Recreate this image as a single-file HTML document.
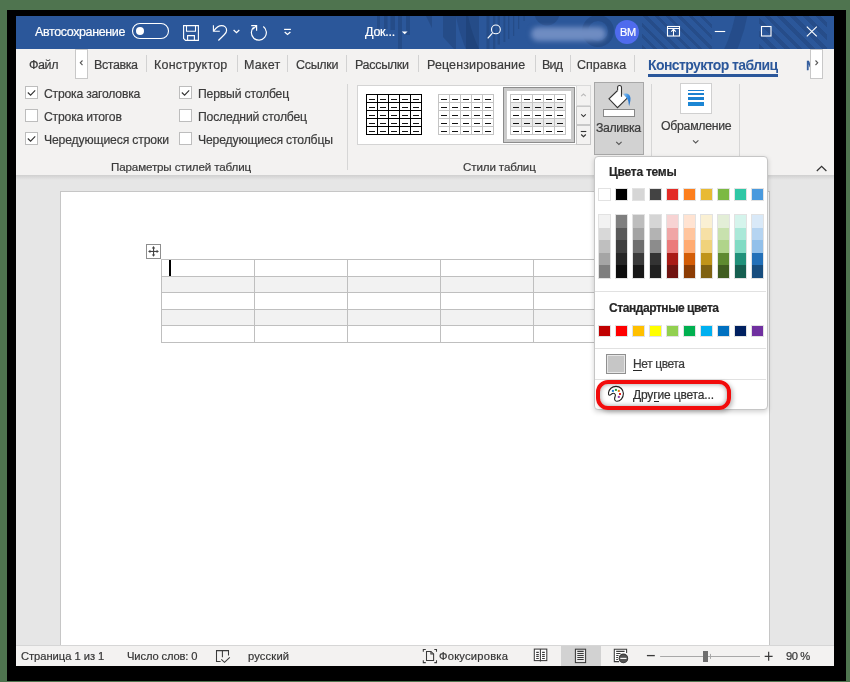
<!DOCTYPE html>
<html><head><meta charset="utf-8">
<style>
*{margin:0;padding:0;box-sizing:border-box}
html,body{width:850px;height:682px;overflow:hidden;background:#4f744f;font-family:"Liberation Sans",sans-serif}
.a{position:absolute}
.t{position:absolute;white-space:nowrap;line-height:1;font-family:"Liberation Sans",sans-serif;will-change:transform;-webkit-text-stroke:0.2px currentColor}
svg{position:absolute;left:0;top:0;overflow:visible}
.sep{position:absolute;width:1px;background:#d2d2d2}
.cb{position:absolute;width:13px;height:13px;background:#fff;border:1px solid #bdbdbd}

</style></head><body>
<div class="a" style="left:7px;top:10px;width:839px;height:671px;background:#000"></div>
<div class="a" style="left:16px;top:16px;width:818px;height:650px;background:#e6e6e6"></div>
<!-- title bar -->
<div class="a" style="left:16px;top:16px;width:818px;height:33px;background:#2b579a;overflow:hidden">
  <svg width="818" height="33" style="left:0;top:0" fill="rgba(20,40,80,.24)" stroke="none">
    <rect x="361" y="0" width="3" height="14"/>
    <rect x="368" y="0" width="3.5" height="13"/>
    <rect x="374.5" y="0" width="4.5" height="14"/>
    <rect x="382" y="0" width="4" height="33"/>
    <rect x="390" y="0" width="4" height="19"/>
    <path d="M410 0H416L416 12Z"/>
    <path d="M427 0H440V33H438L427 21Z"/>
    <rect x="450" y="0" width="13" height="33"/>
    <rect x="470.5" y="0" width="3" height="33"/>
    <rect x="477" y="0" width="2.3" height="33"/>
    <rect x="481.6" y="0" width="2.4" height="28.6"/>
    <rect x="487.5" y="0" width="1.8" height="26"/>
    <rect x="492" y="0" width="1.4" height="23"/>
    <rect x="497" y="0" width="1.2" height="20"/>
    <rect x="502" y="0" width="1.2" height="13"/>
    <rect x="507.5" y="0" width="1.2" height="5"/>
    <circle cx="531" cy="-3" r="12.5"/>
    <circle cx="582" cy="15" r="13" fill="none" stroke="rgba(20,40,80,.24)" stroke-width="6"/>
    <circle cx="585.6" cy="-26" r="142" fill="none" stroke="rgba(20,40,80,.22)" stroke-width="12"/>
  </svg>
  <div class="a" style="left:626px;top:0;width:70px;height:33px;background:repeating-linear-gradient(45deg,rgba(20,40,80,.22) 0 3px,transparent 3px 8px)"></div>
  <div class="a" style="left:743px;top:0;width:68px;height:33px;background:repeating-linear-gradient(45deg,rgba(20,40,80,.22) 0 4px,transparent 4px 9px)"></div>
</div>
<svg width="850" height="682" fill="none" stroke="#fff" stroke-width="1.1">
  <!-- toggle -->
  <rect x="132.5" y="23.5" width="36" height="15" rx="7.5"/>
  <circle cx="140" cy="31" r="4" fill="#fff" stroke="none"/>
  <!-- save -->
  <path d="M183.6 25.6H198.4V40.4H185.5L183.6 38.5Z"/>
  <path d="M186.5 25.6V31.2H195.5V25.6"/>
  <path d="M187.6 40.4V35.6H194.4V40.4"/>
  <!-- undo -->
  <path d="M213.4 25.2V31.3H219.8"/>
  <path d="M213.8 30.8C217 26.5 219.5 25.6 221.6 25.6C224.5 25.6 226.6 27.5 226.6 30.2C226.6 32.2 225.6 33.5 224.2 34.8L218.4 40.5" stroke-width="1.2"/>
  <path d="M233.6 30.1L236.5 32.7L239.3 30.1" stroke-width="1.3"/>
  <!-- redo -->
  <path d="M263.3 26.6A7.5 7.5 0 1 1 253.6 27.3" stroke-width="1.2"/>
  <path d="M251.2 25.6H256.6V30.8" stroke-width="1.2"/>
  <path d="M256.4 25.8L253 29.2" stroke-width="1.2"/>
  <!-- customize -->
  <path d="M284.1 29.4H290.9" stroke-width="1.2"/>
  <path d="M284.7 32.1L287.5 34.5L290.4 32.1" stroke-width="1.3"/>
  <!-- doc dropdown triangle -->
  <path d="M401.8 31.4H407.6L404.7 34.2Z" fill="#fff" stroke="none"/>
  <!-- search -->
  <circle cx="495.9" cy="29.4" r="4.4"/>
  <path d="M492.4 33.1L487.7 38.3" stroke-width="1.2"/>
  <!-- ribbon display -->
  <rect x="667.5" y="26.5" width="12" height="9.5"/>
  <path d="M667.5 28.5H679.5M673.5 29.5V36M671.2 31.6L673.5 29.3L675.8 31.6"/>
  <!-- minimize -->
  <path d="M714.8 31.5H725.2"/>
  <!-- maximize -->
  <rect x="761.5" y="26.5" width="9.5" height="9.5"/>
  <!-- close -->
  <path d="M806.8 26.6L816.8 36.4M816.8 26.6L806.8 36.4"/>
</svg>
<!-- blurred name -->
<div class="a" style="left:531px;top:27px;width:75px;height:14px;border-radius:7px;background:#6f8cc2;filter:blur(2.5px)"></div>
<!-- avatar -->
<div class="a" style="left:615px;top:19.8px;width:24px;height:24px;border-radius:50%;background:#4f6bed"></div>
<div class="t" style="left:619.5px;top:27px;font-size:11px;color:#fff;letter-spacing:-0.4px">BM</div>
<!-- ribbon area -->
<div class="a" style="left:16px;top:49px;width:818px;height:126px;background:#f3f2f1"></div>
<div class="a" style="left:16px;top:175px;width:818px;height:5px;background:linear-gradient(#d0d0d0,#e6e6e6)"></div>
<!-- tab scroll buttons -->
<div class="a" style="left:75px;top:49px;width:13px;height:30px;background:#fff;border:1px solid #c8c8c8"></div>
<svg width="850" height="682" fill="none" stroke="#555" stroke-width="1.1">
  <path d="M82.5 60.5L80.3 62.8L82.5 65"/>
</svg>
<div class="t" style="left:805.6px;top:58.8px;font-size:13.5px;color:#2b579a;-webkit-text-stroke:0.5px #2b579a">М</div>
<div class="a" style="left:810px;top:49px;width:13px;height:30px;background:#fff;border:1px solid #c8c8c8"></div>
<svg width="850" height="682" fill="none" stroke="#555" stroke-width="1.1">
  <path d="M815.5 60.5L817.7 62.8L815.5 65"/>
</svg>
<!-- tab separators -->
<div class="sep" style="left:146px;top:55px;height:17px"></div>
<div class="sep" style="left:237px;top:55px;height:17px"></div>
<div class="sep" style="left:287px;top:55px;height:17px"></div>
<div class="sep" style="left:346px;top:55px;height:17px"></div>
<div class="sep" style="left:418px;top:55px;height:17px"></div>
<div class="sep" style="left:535px;top:55px;height:17px"></div>
<div class="sep" style="left:570px;top:55px;height:17px"></div>
<div class="sep" style="left:634px;top:55px;height:17px"></div>
<div class="a" style="left:648px;top:74px;width:130px;height:3px;background:#2b579a"></div>
<!-- checkboxes -->
<div class="cb" style="left:25px;top:86px"></div>
<div class="cb" style="left:25px;top:109px"></div>
<div class="cb" style="left:25px;top:132px"></div>
<div class="cb" style="left:179px;top:86px"></div>
<div class="cb" style="left:179px;top:109px"></div>
<div class="cb" style="left:179px;top:132px"></div>
<svg width="850" height="682" fill="none" stroke="#333" stroke-width="1.1">
  <path d="M27.8 92.5L30.6 95.2L35.2 90.4"/>
  <path d="M27.8 138.5L30.6 141.2L35.2 136.4"/>
  <path d="M181.8 92.5L184.6 95.2L189.2 90.4"/>
</svg>
<!-- group separators -->
<div class="sep" style="left:347px;top:84px;height:86px;background:#d6d6d6"></div>
<div class="sep" style="left:651px;top:84px;height:86px;background:#d6d6d6"></div>
<div class="sep" style="left:739px;top:84px;height:86px;background:#d6d6d6"></div>
<!-- gallery -->
<div class="a" style="left:357px;top:85px;width:220px;height:60px;background:#fff;border:1px solid #d4d4d4"></div>
<svg width="850" height="682" shape-rendering="crispEdges">
  <defs>
    <pattern id="dash" x="366" y="94" width="11" height="8" patternUnits="userSpaceOnUse">
      <rect x="3" y="4.5" width="6" height="1.3" fill="#000"/>
    </pattern>
  </defs>
</svg>
<svg width="850" height="682" shape-rendering="crispEdges">
<rect x="503.5" y="87.5" width="71" height="55" fill="#cacaca" stroke="#8c8c8c" stroke-width="1"/>
<rect x="507" y="91" width="64" height="48" fill="#fff"/>
<rect x="366" y="94" width="1" height="41" fill="#000"/>
<rect x="377" y="94" width="1" height="41" fill="#000"/>
<rect x="388" y="94" width="1" height="41" fill="#000"/>
<rect x="399" y="94" width="1" height="41" fill="#000"/>
<rect x="410" y="94" width="1" height="41" fill="#000"/>
<rect x="421" y="94" width="1" height="41" fill="#000"/>
<rect x="366" y="94" width="56" height="1" fill="#000"/>
<rect x="366" y="102" width="56" height="1" fill="#000"/>
<rect x="366" y="110" width="56" height="1" fill="#000"/>
<rect x="366" y="118" width="56" height="1" fill="#000"/>
<rect x="366" y="126" width="56" height="1" fill="#000"/>
<rect x="366" y="134" width="56" height="1" fill="#000"/>
<rect x="369" y="99" width="6" height="1" fill="#111"/>
<rect x="369" y="107" width="6" height="1" fill="#111"/>
<rect x="369" y="115" width="6" height="1" fill="#111"/>
<rect x="369" y="123" width="6" height="1" fill="#111"/>
<rect x="369" y="131" width="6" height="1" fill="#111"/>
<rect x="380" y="99" width="6" height="1" fill="#111"/>
<rect x="380" y="107" width="6" height="1" fill="#111"/>
<rect x="380" y="115" width="6" height="1" fill="#111"/>
<rect x="380" y="123" width="6" height="1" fill="#111"/>
<rect x="380" y="131" width="6" height="1" fill="#111"/>
<rect x="391" y="99" width="6" height="1" fill="#111"/>
<rect x="391" y="107" width="6" height="1" fill="#111"/>
<rect x="391" y="115" width="6" height="1" fill="#111"/>
<rect x="391" y="123" width="6" height="1" fill="#111"/>
<rect x="391" y="131" width="6" height="1" fill="#111"/>
<rect x="402" y="99" width="6" height="1" fill="#111"/>
<rect x="402" y="107" width="6" height="1" fill="#111"/>
<rect x="402" y="115" width="6" height="1" fill="#111"/>
<rect x="402" y="123" width="6" height="1" fill="#111"/>
<rect x="402" y="131" width="6" height="1" fill="#111"/>
<rect x="413" y="99" width="6" height="1" fill="#111"/>
<rect x="413" y="107" width="6" height="1" fill="#111"/>
<rect x="413" y="115" width="6" height="1" fill="#111"/>
<rect x="413" y="123" width="6" height="1" fill="#111"/>
<rect x="413" y="131" width="6" height="1" fill="#111"/>
<rect x="438" y="94" width="1" height="41" fill="#c4c4c4"/>
<rect x="449" y="94" width="1" height="41" fill="#c4c4c4"/>
<rect x="460" y="94" width="1" height="41" fill="#c4c4c4"/>
<rect x="471" y="94" width="1" height="41" fill="#c4c4c4"/>
<rect x="482" y="94" width="1" height="41" fill="#c4c4c4"/>
<rect x="493" y="94" width="1" height="41" fill="#c4c4c4"/>
<rect x="438" y="94" width="56" height="1" fill="#c4c4c4"/>
<rect x="438" y="102" width="56" height="1" fill="#c4c4c4"/>
<rect x="438" y="110" width="56" height="1" fill="#c4c4c4"/>
<rect x="438" y="118" width="56" height="1" fill="#c4c4c4"/>
<rect x="438" y="126" width="56" height="1" fill="#c4c4c4"/>
<rect x="438" y="134" width="56" height="1" fill="#c4c4c4"/>
<rect x="441" y="99" width="6" height="1" fill="#111"/>
<rect x="441" y="107" width="6" height="1" fill="#111"/>
<rect x="441" y="115" width="6" height="1" fill="#111"/>
<rect x="441" y="123" width="6" height="1" fill="#111"/>
<rect x="441" y="131" width="6" height="1" fill="#111"/>
<rect x="452" y="99" width="6" height="1" fill="#111"/>
<rect x="452" y="107" width="6" height="1" fill="#111"/>
<rect x="452" y="115" width="6" height="1" fill="#111"/>
<rect x="452" y="123" width="6" height="1" fill="#111"/>
<rect x="452" y="131" width="6" height="1" fill="#111"/>
<rect x="463" y="99" width="6" height="1" fill="#111"/>
<rect x="463" y="107" width="6" height="1" fill="#111"/>
<rect x="463" y="115" width="6" height="1" fill="#111"/>
<rect x="463" y="123" width="6" height="1" fill="#111"/>
<rect x="463" y="131" width="6" height="1" fill="#111"/>
<rect x="474" y="99" width="6" height="1" fill="#111"/>
<rect x="474" y="107" width="6" height="1" fill="#111"/>
<rect x="474" y="115" width="6" height="1" fill="#111"/>
<rect x="474" y="123" width="6" height="1" fill="#111"/>
<rect x="474" y="131" width="6" height="1" fill="#111"/>
<rect x="485" y="99" width="6" height="1" fill="#111"/>
<rect x="485" y="107" width="6" height="1" fill="#111"/>
<rect x="485" y="115" width="6" height="1" fill="#111"/>
<rect x="485" y="123" width="6" height="1" fill="#111"/>
<rect x="485" y="131" width="6" height="1" fill="#111"/>
<rect x="510" y="102" width="55" height="8" fill="#ececec"/>
<rect x="510" y="118" width="55" height="8" fill="#ececec"/>
<rect x="510" y="94" width="1" height="41" fill="#c4c4c4"/>
<rect x="521" y="94" width="1" height="41" fill="#c4c4c4"/>
<rect x="532" y="94" width="1" height="41" fill="#c4c4c4"/>
<rect x="543" y="94" width="1" height="41" fill="#c4c4c4"/>
<rect x="554" y="94" width="1" height="41" fill="#c4c4c4"/>
<rect x="565" y="94" width="1" height="41" fill="#c4c4c4"/>
<rect x="510" y="94" width="56" height="1" fill="#c4c4c4"/>
<rect x="510" y="102" width="56" height="1" fill="#c4c4c4"/>
<rect x="510" y="110" width="56" height="1" fill="#c4c4c4"/>
<rect x="510" y="118" width="56" height="1" fill="#c4c4c4"/>
<rect x="510" y="126" width="56" height="1" fill="#c4c4c4"/>
<rect x="510" y="134" width="56" height="1" fill="#c4c4c4"/>
<rect x="513" y="99" width="6" height="1" fill="#111"/>
<rect x="513" y="107" width="6" height="1" fill="#111"/>
<rect x="513" y="115" width="6" height="1" fill="#111"/>
<rect x="513" y="123" width="6" height="1" fill="#111"/>
<rect x="513" y="131" width="6" height="1" fill="#111"/>
<rect x="524" y="99" width="6" height="1" fill="#111"/>
<rect x="524" y="107" width="6" height="1" fill="#111"/>
<rect x="524" y="115" width="6" height="1" fill="#111"/>
<rect x="524" y="123" width="6" height="1" fill="#111"/>
<rect x="524" y="131" width="6" height="1" fill="#111"/>
<rect x="535" y="99" width="6" height="1" fill="#111"/>
<rect x="535" y="107" width="6" height="1" fill="#111"/>
<rect x="535" y="115" width="6" height="1" fill="#111"/>
<rect x="535" y="123" width="6" height="1" fill="#111"/>
<rect x="535" y="131" width="6" height="1" fill="#111"/>
<rect x="546" y="99" width="6" height="1" fill="#111"/>
<rect x="546" y="107" width="6" height="1" fill="#111"/>
<rect x="546" y="115" width="6" height="1" fill="#111"/>
<rect x="546" y="123" width="6" height="1" fill="#111"/>
<rect x="546" y="131" width="6" height="1" fill="#111"/>
<rect x="557" y="99" width="6" height="1" fill="#111"/>
<rect x="557" y="107" width="6" height="1" fill="#111"/>
<rect x="557" y="115" width="6" height="1" fill="#111"/>
<rect x="557" y="123" width="6" height="1" fill="#111"/>
<rect x="557" y="131" width="6" height="1" fill="#111"/>
</svg>
<!-- gallery scroll buttons -->
<div class="a" style="left:576px;top:85px;width:15px;height:21px;background:#f3f2f1;border:1px solid #dadada"></div>
<div class="a" style="left:576px;top:106px;width:15px;height:19px;background:#f3f2f1;border:1px solid #c8c8c8"></div>
<div class="a" style="left:576px;top:125px;width:15px;height:20px;background:#f3f2f1;border:1px solid #c8c8c8"></div>
<svg width="850" height="682" fill="none" stroke-width="1.1">
  <path d="M581.2 96.2L583.5 94L585.8 96.2" stroke="#bbb"/>
  <path d="M581.2 114.4L583.5 116.6L585.8 114.4" stroke="#333"/>
  <path d="M580.8 131.5H586.3" stroke="#333"/>
  <path d="M581.2 134.5L583.5 136.7L585.8 134.5" stroke="#333"/>
</svg>
<!-- fill button -->
<div class="a" style="left:594px;top:82px;width:49.5px;height:72.5px;background:#d2d2d2;border:1px solid #a8a8a8"></div>
<svg width="850" height="682" fill="none">
  <rect x="603.5" y="109.5" width="31" height="7" fill="#fff" stroke="#888" stroke-width="1"/>
  <path d="M617.6 90.5L627.2 98.2L617.5 107.6L609 98.8Z" fill="#fff"/>
  <path d="M627.2 98.2L617.5 107.6L609 98.8L617.6 90.5" stroke="#333" stroke-width="1.1"/>
  <path d="M617.6 90.5V87.5C617.6 84.8 621.5 84.8 621.5 87.5V96.8" fill="#fff" stroke="#333" stroke-width="1.1"/>
  <defs><linearGradient id="drip" x1="0" y1="0" x2="1" y2="1"><stop offset="0" stop-color="#8cc4f4"/><stop offset=".45" stop-color="#3a8ee0"/><stop offset="1" stop-color="#1a66c0"/></linearGradient></defs>
  <path d="M623.6 94C626.8 92.5 630.5 94.6 630.5 98.5C630.5 101.5 629.6 104 629.1 106.3C628.4 103 628.8 100.3 626.8 98.2Z" fill="url(#drip)"/>
  <path d="M616.2 141.8L618.9 144.4L621.6 141.8" stroke="#555" stroke-width="1.1"/>
</svg>
<!-- border button -->
<div class="a" style="left:680px;top:83px;width:32px;height:31px;background:#fff;border:1px solid #d0d0d0"></div>
<div class="a" style="left:688px;top:90px;width:16px;height:1px;background:#1b80d0"></div>
<div class="a" style="left:688px;top:93px;width:16px;height:2px;background:#1b80d0"></div>
<div class="a" style="left:688px;top:97px;width:16px;height:3px;background:#1b80d0"></div>
<div class="a" style="left:688px;top:102px;width:16px;height:4px;background:#1c86d4"></div>
<svg width="850" height="682" fill="none" stroke-width="1.1">
  <path d="M693 140.3L695.7 142.9L698.4 140.3" stroke="#555"/>
  <path d="M816.8 171L821.6 166.4L826.4 171" stroke="#333" stroke-width="1.25"/>
</svg>
<!-- page -->
<div class="a" style="left:60px;top:191px;width:710px;height:460px;background:#fff;border:1px solid #c6c6c6"></div>
<!-- table move handle -->
<div class="a" style="left:146px;top:244px;width:15px;height:15px;background:#fff;border:1px solid #8e8e8e"></div>
<svg width="850" height="682" fill="#444" stroke="none">
  <rect x="153" y="248" width="1.1" height="7"/>
  <rect x="150" y="250.9" width="7" height="1.1"/>
  <path d="M151.8 248.4L153.5 246.1L155.2 248.4Z"/>
  <path d="M151.8 254.5L153.5 256.8L155.2 254.5Z"/>
  <path d="M150.4 249.7L148.1 251.4L150.4 253.1Z"/>
  <path d="M156.6 249.7L158.9 251.4L156.6 253.1Z"/>
</svg>
<svg width="850" height="682" shape-rendering="crispEdges">
<rect x="161" y="276" width="560" height="16.5" fill="#f2f2f2"/>
<rect x="161" y="309" width="560" height="16.5" fill="#f2f2f2"/>
<rect x="161" y="259" width="1" height="83" fill="#bfbfbf"/>
<rect x="254" y="259" width="1" height="83" fill="#bfbfbf"/>
<rect x="347" y="259" width="1" height="83" fill="#bfbfbf"/>
<rect x="440" y="259" width="1" height="83" fill="#bfbfbf"/>
<rect x="533" y="259" width="1" height="83" fill="#bfbfbf"/>
<rect x="626" y="259" width="1" height="83" fill="#bfbfbf"/>
<rect x="719" y="259" width="1" height="83" fill="#bfbfbf"/>
<rect x="161" y="259" width="559" height="1" fill="#bfbfbf"/>
<rect x="161" y="276" width="559" height="1" fill="#bfbfbf"/>
<rect x="161" y="292" width="559" height="1" fill="#bfbfbf"/>
<rect x="161" y="309" width="559" height="1" fill="#bfbfbf"/>
<rect x="161" y="325" width="559" height="1" fill="#bfbfbf"/>
<rect x="161" y="342" width="559" height="1" fill="#bfbfbf"/>
<rect x="169" y="260" width="2" height="16" fill="#000"/>
</svg>
<!-- status bar -->
<div class="a" style="left:16px;top:645px;width:818px;height:21px;background:#f3f2f1;border-top:1px solid #d6d6d6"></div>
<div class="a" style="left:561px;top:646px;width:40px;height:20px;background:#d2d2d2"></div>
<svg width="850" height="682" fill="none" stroke="#3a3a3a" stroke-width="1.05">
  <path d="M220.6 661.4H216.5V650.6H222.4V657.3M222.4 650.6H228.5V655.5"/>
  <path d="M221.3 659.4L224.5 662.4L229.8 657.3"/>
  <path d="M423.3 651.7V649.4H425.8M434.3 649.4H436.5V651.7M423.3 660.2V662.6H425.8M434.3 662.6H436.5V660.2"/>
  <path d="M426.5 651.4H430.9L433.6 653.9V660.5H426.5Z"/>
  <path d="M430.9 651.4V653.9H433.6"/>
  <rect x="534.3" y="649.1" width="12.5" height="11.5" fill="#fff"/>
  <path d="M540.4 649.1V661.4"/>
  <path d="M536.2 652.4H538.8M536.2 654.5H538.8M536.2 656.4H538.8M536.2 658.5H538.8M542.1 652.4H544.8M542.1 654.5H544.8M542.1 656.4H544.8M542.1 658.5H544.8" stroke-width="1.1"/>
  <rect x="575.4" y="649.2" width="10.2" height="13.4" fill="#e8e8e8"/>
  <path d="M577.3 651.4H583.7M577.3 653.5H583.7M577.3 655.5H583.7M577.3 657.5H583.7M577.3 659.5H583.7" stroke-width="1.1"/>
  <path d="M619 661.6H614.3V649.2H626.6V653" fill="#fff"/>
  <path d="M616.2 651.4H624.6M616.2 653.5H620.5M616.2 655.5H618.5M616.2 657.5H618M616.2 659.5H618" stroke-width="1.1"/>
  <circle cx="623.4" cy="658.4" r="4.3" fill="#555" stroke="#3a3a3a"/>
  <path d="M620.3 658.4H626.5" stroke="#fff" stroke-width="1.1"/>
  <path d="M646.9 655.6H654.8" stroke-width="1.3"/>
  <path d="M764.7 656.3H772.6M768.65 651.8V660.8" stroke-width="1.2"/>
  <path d="M660.1 656.5H760" stroke="#a8a8a8" stroke-width="1"/>
  <path d="M710.5 653.9V658.9" stroke="#a8a8a8" stroke-width="1"/>
</svg>
<div class="a" style="left:703px;top:651px;width:5px;height:11px;background:#6e6e6e"></div>
<!-- dropdown -->
<div class="a" style="left:594px;top:156px;width:174px;height:254px;background:#fff;border:1px solid #c6c6c6;border-radius:4px;box-shadow:0 2px 5px rgba(0,0,0,.18)"></div>
<svg width="850" height="682" shape-rendering="crispEdges">
<rect x="598" y="188" width="13" height="13" fill="#e2e2e2"/>
<rect x="599" y="189" width="11" height="11" fill="#ffffff"/>
<rect x="598" y="214" width="13" height="64.5" fill="#e2e2e2"/>
<rect x="599" y="215.0" width="11" height="12.5" fill="#f2f2f2"/>
<rect x="599" y="227.5" width="11" height="12.5" fill="#d8d8d8"/>
<rect x="599" y="240.0" width="11" height="12.5" fill="#bfbfbf"/>
<rect x="599" y="252.5" width="11" height="12.5" fill="#a5a5a5"/>
<rect x="599" y="265.0" width="11" height="12.5" fill="#7f7f7f"/>
<rect x="598" y="324.5" width="13" height="12" fill="#e2e2e2"/>
<rect x="599" y="325.5" width="11" height="10" fill="#c00000"/>
<rect x="615" y="188" width="13" height="13" fill="#e2e2e2"/>
<rect x="616" y="189" width="11" height="11" fill="#000000"/>
<rect x="615" y="214" width="13" height="64.5" fill="#e2e2e2"/>
<rect x="616" y="215.0" width="11" height="12.5" fill="#7f7f7f"/>
<rect x="616" y="227.5" width="11" height="12.5" fill="#595959"/>
<rect x="616" y="240.0" width="11" height="12.5" fill="#3f3f3f"/>
<rect x="616" y="252.5" width="11" height="12.5" fill="#262626"/>
<rect x="616" y="265.0" width="11" height="12.5" fill="#0c0c0c"/>
<rect x="615" y="324.5" width="13" height="12" fill="#e2e2e2"/>
<rect x="616" y="325.5" width="11" height="10" fill="#ff0000"/>
<rect x="632" y="188" width="13" height="13" fill="#e2e2e2"/>
<rect x="633" y="189" width="11" height="11" fill="#d6d6d6"/>
<rect x="632" y="214" width="13" height="64.5" fill="#e2e2e2"/>
<rect x="633" y="215.0" width="11" height="12.5" fill="#bdbdbd"/>
<rect x="633" y="227.5" width="11" height="12.5" fill="#a3a3a3"/>
<rect x="633" y="240.0" width="11" height="12.5" fill="#6f6f6f"/>
<rect x="633" y="252.5" width="11" height="12.5" fill="#3a3a3a"/>
<rect x="633" y="265.0" width="11" height="12.5" fill="#171717"/>
<rect x="632" y="324.5" width="13" height="12" fill="#e2e2e2"/>
<rect x="633" y="325.5" width="11" height="10" fill="#ffc000"/>
<rect x="649" y="188" width="13" height="13" fill="#e2e2e2"/>
<rect x="650" y="189" width="11" height="11" fill="#434343"/>
<rect x="649" y="214" width="13" height="64.5" fill="#e2e2e2"/>
<rect x="650" y="215.0" width="11" height="12.5" fill="#d5d5d5"/>
<rect x="650" y="227.5" width="11" height="12.5" fill="#b3b3b3"/>
<rect x="650" y="240.0" width="11" height="12.5" fill="#8c8c8c"/>
<rect x="650" y="252.5" width="11" height="12.5" fill="#333333"/>
<rect x="650" y="265.0" width="11" height="12.5" fill="#202020"/>
<rect x="649" y="324.5" width="13" height="12" fill="#e2e2e2"/>
<rect x="650" y="325.5" width="11" height="10" fill="#ffff00"/>
<rect x="666" y="188" width="13" height="13" fill="#e2e2e2"/>
<rect x="667" y="189" width="11" height="11" fill="#e32b26"/>
<rect x="666" y="214" width="13" height="64.5" fill="#e2e2e2"/>
<rect x="667" y="215.0" width="11" height="12.5" fill="#f7d3d3"/>
<rect x="667" y="227.5" width="11" height="12.5" fill="#f0a6a6"/>
<rect x="667" y="240.0" width="11" height="12.5" fill="#eb7b7b"/>
<rect x="667" y="252.5" width="11" height="12.5" fill="#a91b16"/>
<rect x="667" y="265.0" width="11" height="12.5" fill="#701310"/>
<rect x="666" y="324.5" width="13" height="12" fill="#e2e2e2"/>
<rect x="667" y="325.5" width="11" height="10" fill="#92d050"/>
<rect x="683" y="188" width="13" height="13" fill="#e2e2e2"/>
<rect x="684" y="189" width="11" height="11" fill="#fd7f1d"/>
<rect x="683" y="214" width="13" height="64.5" fill="#e2e2e2"/>
<rect x="684" y="215.0" width="11" height="12.5" fill="#ffe3d2"/>
<rect x="684" y="227.5" width="11" height="12.5" fill="#ffc59e"/>
<rect x="684" y="240.0" width="11" height="12.5" fill="#ffab72"/>
<rect x="684" y="252.5" width="11" height="12.5" fill="#d35d07"/>
<rect x="684" y="265.0" width="11" height="12.5" fill="#8c3d05"/>
<rect x="683" y="324.5" width="13" height="12" fill="#e2e2e2"/>
<rect x="684" y="325.5" width="11" height="10" fill="#00b050"/>
<rect x="700" y="188" width="13" height="13" fill="#e2e2e2"/>
<rect x="701" y="189" width="11" height="11" fill="#e8ba33"/>
<rect x="700" y="214" width="13" height="64.5" fill="#e2e2e2"/>
<rect x="701" y="215.0" width="11" height="12.5" fill="#faf0d3"/>
<rect x="701" y="227.5" width="11" height="12.5" fill="#f6e0a5"/>
<rect x="701" y="240.0" width="11" height="12.5" fill="#f0d27b"/>
<rect x="701" y="252.5" width="11" height="12.5" fill="#c09419"/>
<rect x="701" y="265.0" width="11" height="12.5" fill="#7f6212"/>
<rect x="700" y="324.5" width="13" height="12" fill="#e2e2e2"/>
<rect x="701" y="325.5" width="11" height="10" fill="#00b0f0"/>
<rect x="717" y="188" width="13" height="13" fill="#e2e2e2"/>
<rect x="718" y="189" width="11" height="11" fill="#7cb943"/>
<rect x="717" y="214" width="13" height="64.5" fill="#e2e2e2"/>
<rect x="718" y="215.0" width="11" height="12.5" fill="#e3eed7"/>
<rect x="718" y="227.5" width="11" height="12.5" fill="#c8e1ae"/>
<rect x="718" y="240.0" width="11" height="12.5" fill="#b0d48a"/>
<rect x="718" y="252.5" width="11" height="12.5" fill="#5e8a30"/>
<rect x="718" y="265.0" width="11" height="12.5" fill="#3f5c20"/>
<rect x="717" y="324.5" width="13" height="12" fill="#e2e2e2"/>
<rect x="718" y="325.5" width="11" height="10" fill="#0070c0"/>
<rect x="734" y="188" width="13" height="13" fill="#e2e2e2"/>
<rect x="735" y="189" width="11" height="11" fill="#2fc7a5"/>
<rect x="734" y="214" width="13" height="64.5" fill="#e2e2e2"/>
<rect x="735" y="215.0" width="11" height="12.5" fill="#d5f4ec"/>
<rect x="735" y="227.5" width="11" height="12.5" fill="#aae8d8"/>
<rect x="735" y="240.0" width="11" height="12.5" fill="#81dbc4"/>
<rect x="735" y="252.5" width="11" height="12.5" fill="#21917a"/>
<rect x="735" y="265.0" width="11" height="12.5" fill="#165f50"/>
<rect x="734" y="324.5" width="13" height="12" fill="#e2e2e2"/>
<rect x="735" y="325.5" width="11" height="10" fill="#002060"/>
<rect x="751" y="188" width="13" height="13" fill="#e2e2e2"/>
<rect x="752" y="189" width="11" height="11" fill="#4a9ade"/>
<rect x="751" y="214" width="13" height="64.5" fill="#e2e2e2"/>
<rect x="752" y="215.0" width="11" height="12.5" fill="#d9e9f8"/>
<rect x="752" y="227.5" width="11" height="12.5" fill="#b5d4f1"/>
<rect x="752" y="240.0" width="11" height="12.5" fill="#92c0ea"/>
<rect x="752" y="252.5" width="11" height="12.5" fill="#2370b8"/>
<rect x="752" y="265.0" width="11" height="12.5" fill="#184d7e"/>
<rect x="751" y="324.5" width="13" height="12" fill="#e2e2e2"/>
<rect x="752" y="325.5" width="11" height="10" fill="#7030a0"/>
<rect x="595" y="291" width="171" height="1" fill="#e1e1e1"/>
<rect x="595" y="348" width="171" height="1" fill="#e1e1e1"/>
<rect x="595" y="379" width="171" height="1" fill="#e1e1e1"/>
<rect x="606" y="354" width="20" height="20" fill="#8f8f8f"/>
<rect x="607" y="355" width="18" height="18" fill="#e6e6e6"/>
<rect x="608" y="356" width="16" height="16" fill="#c6c6c6"/>
</svg>
<div class="a" style="left:596px;top:379.5px;width:135px;height:30px;border:4px solid #f20c0c;border-radius:12px;box-shadow:inset 0 0 5px rgba(0,0,0,.4),2px 2px 4px rgba(0,0,0,.25)"></div>
<svg width="850" height="682" fill="none">
  <path d="M616 386.4C620.3 386.4 623.4 389.6 623.4 393.6C623.4 398 620.3 401.3 617 401.3C615.4 401.3 614.5 400.1 614.6 398.6C614.7 397.1 615.7 395.7 615.3 394.6C614.8 393.4 613.6 393.1 612.5 393.5C611.3 394 610.5 395.4 609.3 395.2C608.5 395.1 608.4 394 608.5 392.8C608.9 389.1 612 386.4 616 386.4Z" stroke="#1e1e1e" stroke-width="1.1"/>
  <rect x="611.9" y="389.9" width="2" height="2" fill="#1f7ad0"/>
  <rect x="614.9" y="388.9" width="2" height="2" fill="#1c9a3e"/>
  <rect x="617.8" y="389.9" width="2" height="2" fill="#e0780e"/>
  <rect x="619" y="393" width="2" height="2" fill="#e82020"/>
  <rect x="617.8" y="395.9" width="2" height="2" fill="#8a3aa8"/>
</svg>
<div class="a" style="left:633px;top:369.5px;width:8.5px;height:1px;background:#262626"></div>
<div class="a" style="left:653.5px;top:401px;width:5.5px;height:1px;background:#262626"></div>

<div class="t" style="left:35.00px;top:25.72px;font-size:12.5px;color:#fff;letter-spacing:-0.378px;">Автосохранение</div>
<div class="t" style="left:364.50px;top:25.92px;font-size:12.5px;color:#fff;letter-spacing:-0.224px;">Док...</div>
<div class="t" style="left:28.60px;top:59.42px;font-size:12.5px;color:#3b3b3b;letter-spacing:-0.433px;">Файл</div>
<div class="t" style="left:93.60px;top:59.42px;font-size:12.5px;color:#3b3b3b;letter-spacing:-0.423px;">Вставка</div>
<div class="t" style="left:153.90px;top:59.42px;font-size:12.5px;color:#3b3b3b;letter-spacing:0.203px;">Конструктор</div>
<div class="t" style="left:243.80px;top:59.42px;font-size:12.5px;color:#3b3b3b;letter-spacing:0.185px;">Макет</div>
<div class="t" style="left:295.50px;top:59.42px;font-size:12.5px;color:#3b3b3b;letter-spacing:-0.318px;">Ссылки</div>
<div class="t" style="left:354.80px;top:59.42px;font-size:12.5px;color:#3b3b3b;letter-spacing:-0.300px;">Рассылки</div>
<div class="t" style="left:426.70px;top:59.42px;font-size:12.5px;color:#3b3b3b;letter-spacing:0.120px;">Рецензирование</div>
<div class="t" style="left:541.70px;top:59.42px;font-size:12.5px;color:#3b3b3b;letter-spacing:-0.771px;">Вид</div>
<div class="t" style="left:577.20px;top:59.42px;font-size:12.5px;color:#3b3b3b;letter-spacing:0.038px;">Справка</div>
<div class="t" style="left:647.80px;top:57.85px;font-size:14px;color:#2b579a;font-weight:bold;letter-spacing:-0.587px;-webkit-text-stroke:0;">Конструктор таблиц</div>
<div class="t" style="left:43.70px;top:87.67px;font-size:12.2px;color:#3b3b3b;letter-spacing:-0.221px;">Строка заголовка</div>
<div class="t" style="left:197.90px;top:87.67px;font-size:12.2px;color:#3b3b3b;letter-spacing:-0.179px;">Первый столбец</div>
<div class="t" style="left:43.70px;top:110.67px;font-size:12.2px;color:#3b3b3b;letter-spacing:-0.190px;">Строка итогов</div>
<div class="t" style="left:197.90px;top:110.67px;font-size:12.2px;color:#3b3b3b;letter-spacing:-0.174px;">Последний столбец</div>
<div class="t" style="left:43.70px;top:133.67px;font-size:12.2px;color:#3b3b3b;letter-spacing:-0.147px;">Чередующиеся строки</div>
<div class="t" style="left:197.90px;top:133.67px;font-size:12.2px;color:#3b3b3b;letter-spacing:-0.165px;">Чередующиеся столбцы</div>
<div class="t" style="left:110.50px;top:161.18px;font-size:11.6px;color:#3b3b3b;letter-spacing:-0.137px;">Параметры стилей таблиц</div>
<div class="t" style="left:463.20px;top:161.48px;font-size:11.6px;color:#3b3b3b;letter-spacing:-0.129px;">Стили таблиц</div>
<div class="t" style="left:596.00px;top:121.99px;font-size:12.3px;color:#3b3b3b;letter-spacing:-0.376px;">Заливка</div>
<div class="t" style="left:660.70px;top:119.99px;font-size:12.3px;color:#3b3b3b;letter-spacing:-0.285px;">Обрамление</div>
<div class="t" style="left:608.90px;top:165.84px;font-size:12px;color:#262626;font-weight:bold;letter-spacing:-0.250px;">Цвета темы</div>
<div class="t" style="left:608.60px;top:302.04px;font-size:12px;color:#262626;font-weight:bold;letter-spacing:-0.434px;">Стандартные цвета</div>
<div class="t" style="left:632.80px;top:358.14px;font-size:12px;color:#3a3a3a;letter-spacing:-0.399px;">Нет цвета</div>
<div class="t" style="left:632.60px;top:388.84px;font-size:12px;color:#303030;letter-spacing:-0.152px;">Другие цвета...</div>
<div class="t" style="left:21.40px;top:651.42px;font-size:11.2px;color:#363636;letter-spacing:-0.043px;">Страница 1 из 1</div>
<div class="t" style="left:126.60px;top:651.42px;font-size:11.2px;color:#363636;letter-spacing:-0.141px;">Число слов: 0</div>
<div class="t" style="left:248.20px;top:651.42px;font-size:11.2px;color:#363636;letter-spacing:0.151px;">русский</div>
<div class="t" style="left:439.20px;top:651.42px;font-size:11.2px;color:#363636;letter-spacing:0.208px;">Фокусировка</div>
<div class="t" style="left:785.80px;top:651.42px;font-size:11.2px;color:#363636;letter-spacing:-0.450px;">90 %</div>
</body></html>
